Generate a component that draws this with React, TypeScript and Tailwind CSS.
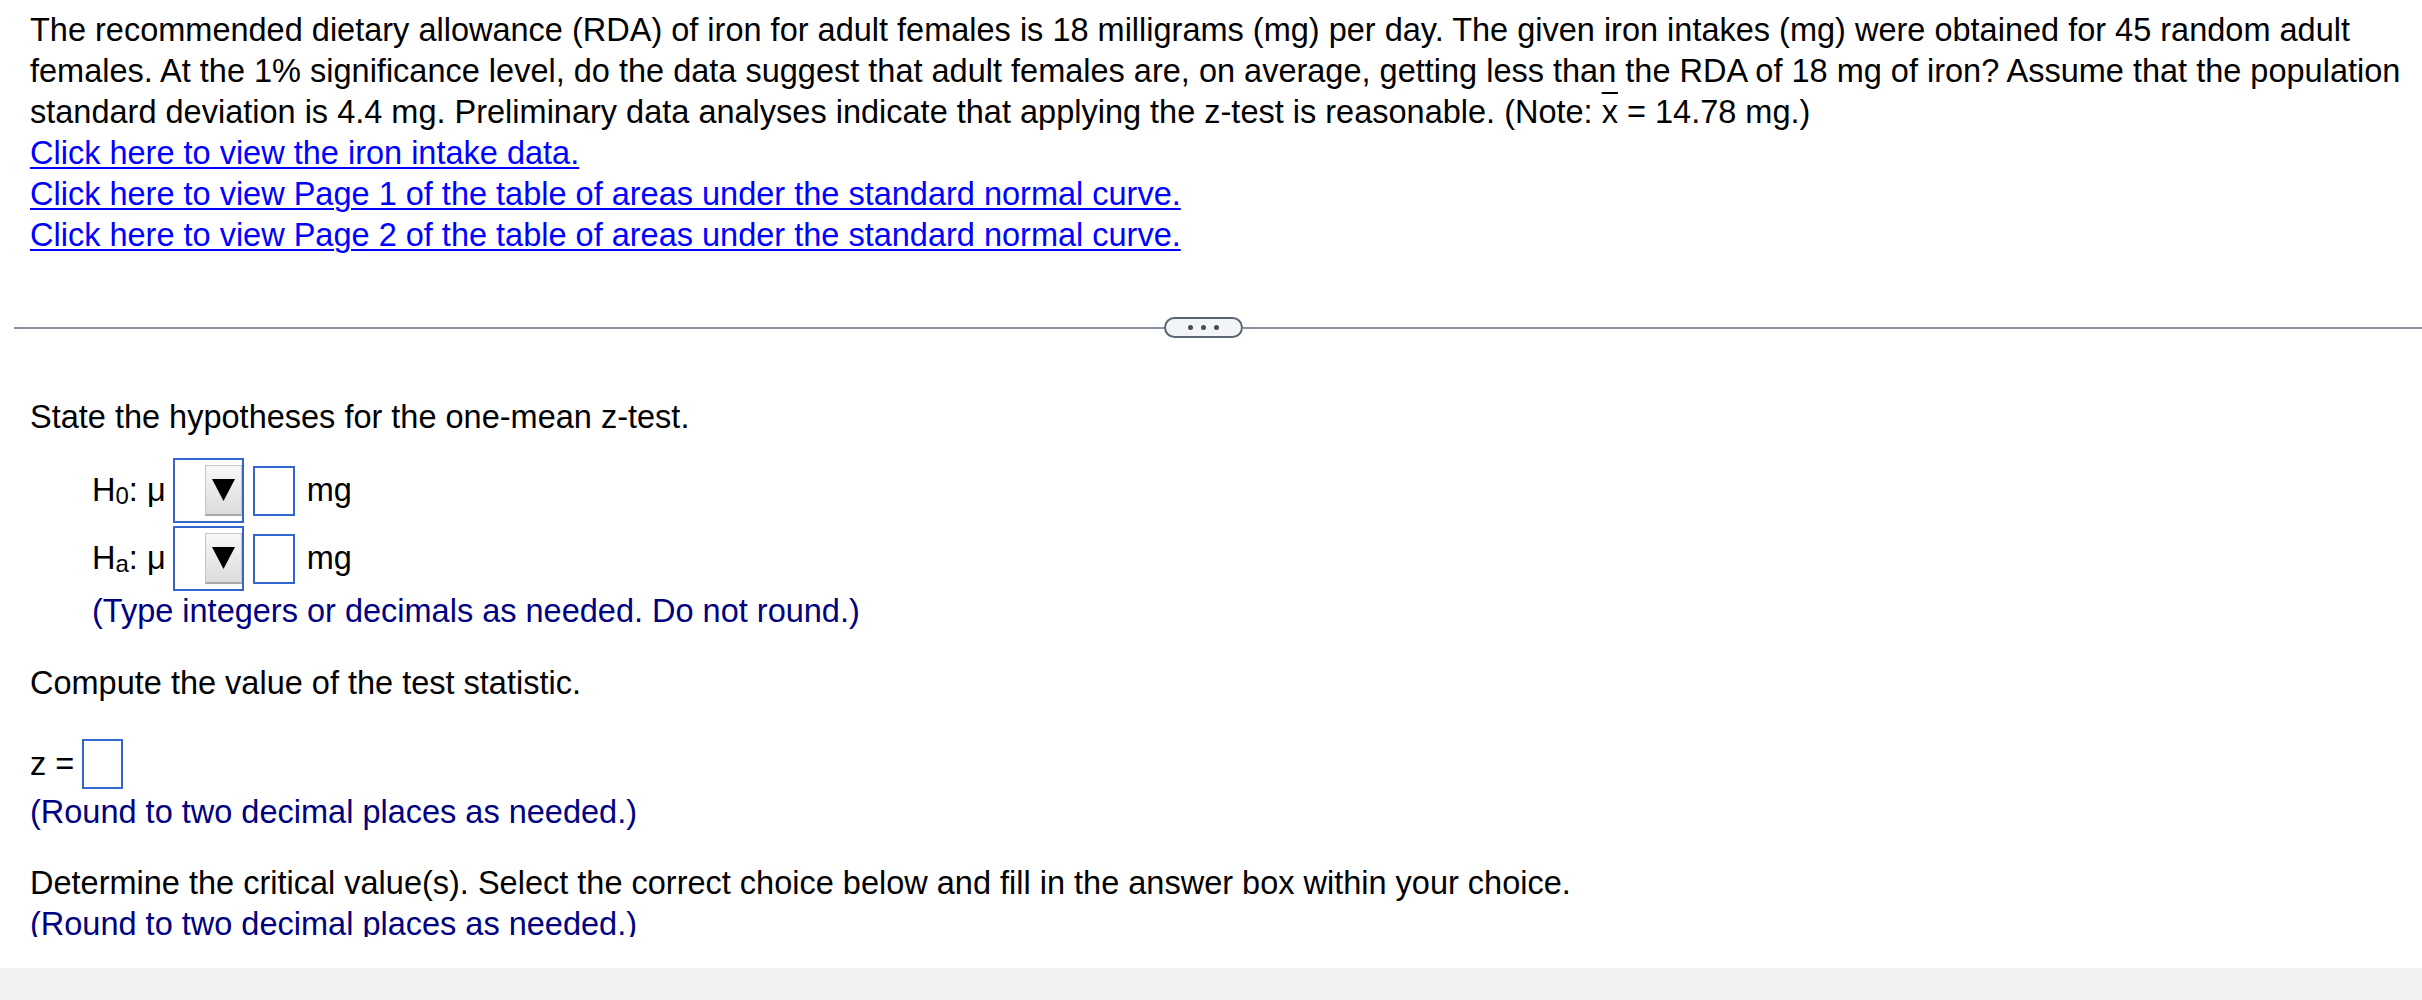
import React from "react";

const BLUE_BOX = "border-2 border-[#3366cc]";

function Select() {
  return (
    <div className={`flex h-[65px] w-[71px] items-center justify-end ${BLUE_BOX}`}>
      <div className="flex h-[51px] w-[37px] items-center justify-center border border-[#c4c4c4] border-b-2 border-b-[#a9a9a9] bg-gradient-to-b from-[#f8f8f8] to-[#dcdcdc]">
        <svg width="23" height="22" viewBox="0 0 23 22">
          <polygon points="0,0 23,0 11.5,22" fill="#000" />
        </svg>
      </div>
    </div>
  );
}

function AnswerBox() {
  return <div className={`h-[50px] w-[42px] bg-white ${BLUE_BOX}`} />;
}

function Hypothesis({ sub }: { sub: string }) {
  return (
    <div className="flex items-center pl-[92px]">
      <span className="whitespace-nowrap">
        H<sub className="relative top-[3px] text-[24px]">{sub}</sub>: μ
      </span>
      <div className="ml-[7px]">
        <Select />
      </div>
      <div className="ml-[9px]">
        <AnswerBox />
      </div>
      <span className="ml-[12px]">mg</span>
    </div>
  );
}

export default function App() {
  return (
    <div className="flex h-[1000px] w-full flex-col bg-white font-['Liberation_Sans',Arial,sans-serif] text-[32.5px] leading-[41px] text-black">
      <div className="h-[937px] overflow-hidden">
        {/* Question text */}
        <div className="whitespace-nowrap px-[30px] pt-[10px]">
          The recommended dietary allowance (RDA) of iron for adult females is 18 milligrams (mg) per day. The given iron
          intakes (mg) were obtained for 45 random adult
          <br />
          females. At the 1% significance level, do the data suggest that adult females are, on average, getting less than
          the RDA of 18 mg of iron? Assume that the population
          <br />
          standard deviation is 4.4 mg. Preliminary data analyses indicate that applying the z-test is reasonable. (Note:{" "}
          <span className="overline decoration-2">x</span> = 14.78 mg.)
          <br />
          <a href="#" className="text-[#0000ff] underline decoration-2 underline-offset-[3px]">
            Click here to view the iron intake data.
          </a>
          <br />
          <a href="#" className="text-[#0000ff] underline decoration-2 underline-offset-[3px]">
            Click here to view Page 1 of the table of areas under the standard normal curve.
          </a>
          <br />
          <a href="#" className="text-[#0000ff] underline decoration-2 underline-offset-[3px]">
            Click here to view Page 2 of the table of areas under the standard normal curve.
          </a>
        </div>

        {/* Divider */}
        <div className="mt-[61px] flex h-[21px] items-center pl-[14px]">
          <div className="h-[2px] w-[1150px] bg-[#8a919d]" />
          <div className="flex h-[21px] w-[79px] items-center justify-center gap-[8px] rounded-full border-2 border-[#5b6674] bg-[#f3f4f6]">
            <span className="h-[5px] w-[5px] rounded-full bg-[#474b52]" />
            <span className="h-[5px] w-[5px] rounded-full bg-[#474b52]" />
            <span className="h-[5px] w-[5px] rounded-full bg-[#474b52]" />
          </div>
          <div className="h-[2px] flex-1 bg-[#8a919d]" />
        </div>

        {/* Hypotheses */}
        <div className="mt-[59px] px-[30px]">State the hypotheses for the one-mean z-test.</div>
        <div className="mt-[20px] flex flex-col gap-[3px]">
          <Hypothesis sub="0" />
          <Hypothesis sub="a" />
        </div>
        <div className="pl-[92px] text-[#000080]">(Type integers or decimals as needed. Do not round.)</div>

        {/* Test statistic */}
        <div className="mt-[31px] px-[30px]">Compute the value of the test statistic.</div>
        <div className="mt-[35px] flex items-center px-[30px]">
          <span className="whitespace-nowrap">z =</span>
          <div className="ml-[8px]">
            <div className={`h-[50px] w-[41px] bg-white ${BLUE_BOX}`} />
          </div>
        </div>
        <div className="mt-[3px] px-[30px] text-[#000080]">(Round to two decimal places as needed.)</div>

        {/* Critical values */}
        <div className="mt-[30px] whitespace-nowrap px-[30px]">
          Determine the critical value(s). Select the correct choice below and fill in the answer box within your choice.
        </div>
        <div className="px-[30px] text-[#000080]">(Round to two decimal places as needed.)</div>
      </div>
      <div className="h-[31px] bg-white" />
      <div className="flex-1 bg-[#f2f2f2]" />
    </div>
  );
}
